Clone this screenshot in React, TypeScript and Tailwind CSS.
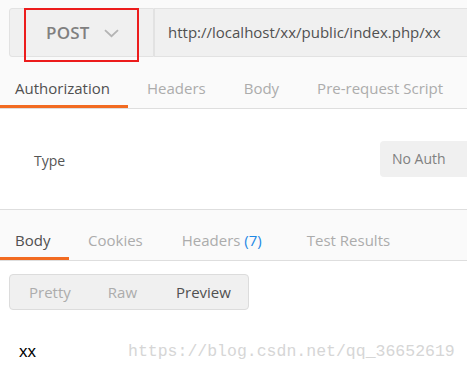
import React from 'react'

const font = { fontFamily: '"Open Sans", "Noto Sans", sans-serif' }

const Tab = ({ label, active, className }: { label: React.ReactNode; active?: boolean; className?: string }) => (
  <div className={`relative h-full flex items-center ${className ?? ''}`}>
    <span className={active ? 'text-[#505050]' : 'text-[#acacac]'}>{label}</span>
    {active && <div className="absolute left-0 right-0 bottom-0 h-[3px] bg-[#f26b21]" />}
  </div>
)

const App = () => {
  return (
    <div className="w-[467px] h-[371px] bg-white overflow-hidden" style={font}>
      <div className="bg-[#fafafa] border-b border-[#dedede]">
        {/* request bar */}
        <div className="flex pt-[8px] pl-[9px]">
          <div className="relative w-[145px] h-[49px] bg-[#f0f0f0] border border-[#e2e2e2] rounded-l-[3px] flex items-center">
            <span className="ml-[36px] text-[17px] font-semibold text-[#808080] tracking-[0.2px]">POST</span>
            <svg className="ml-[14px] mt-[1px]" width="15" height="9" viewBox="0 0 15 9">
              <path d="M1 1.2 L7.5 7.2 L14 1.2" stroke="#b4b4b4" strokeWidth="1.8" fill="none" />
            </svg>
            <div className="absolute left-[14px] top-[-1px] w-[115px] h-[54px] border-2 border-[#ec1c1c]" />
          </div>
          <div className="flex-1 h-[49px] bg-[#f0f0f0] border border-[#e2e2e2] border-r-0 flex items-center pl-[13px] text-[15px] text-[#505050]">
            http://localhost/xx/public/index.php/xx
          </div>
        </div>
        {/* tabs */}
        <div className="flex h-[51px] text-[15px] pt-[11px]">
          <Tab label="Authorization" active className="w-[128px] pl-[15px]" />
          <Tab label="Headers" className="ml-[19px]" />
          <Tab label="Body" className="ml-[38px]" />
          <Tab label="Pre-request Script" className="ml-[38px]" />
        </div>
      </div>

      <div className="h-[101px] flex items-center justify-between border-b border-[#dedede]">
        <span className="ml-[34px] mt-[3px] text-[14px] text-[#555]">Type</span>
        <div className="w-[87px] h-[36px] bg-[#f0f0f0] rounded-l-[4px] flex items-center pl-[12px] text-[14px] text-[#808080] mt-[-1px]">
          No Auth
        </div>
      </div>

      <div className="bg-[#fafafa] border-b border-[#dedede] flex h-[51px] text-[15px] pt-[11px]">
        <Tab label="Body" active className="w-[69px] pl-[15px]" />
        <Tab label="Cookies" className="ml-[19px]" />
        <Tab
          label={
            <>
              Headers <span className="text-[#1e88e5]">(7)</span>
            </>
          }
          className="ml-[39px]"
        />
        <Tab label="Test Results" className="ml-[45px]" />
      </div>

      <div className="pt-[13px] pl-[9px]">
        <div className="w-[240px] h-[36px] bg-[#f0f0f0] border border-[#dcdcdc] rounded-[4px] flex items-center text-[15px]">
          <span className="ml-[19px] text-[#acacac]">Pretty</span>
          <span className="ml-[37px] text-[#acacac]">Raw</span>
          <span className="ml-[39px] text-[#505050]">Preview</span>
        </div>
      </div>

      <div className="flex items-center mt-[30px] h-[24px]">
        <span className="ml-[19px] text-[17px] text-black" style={{ fontFamily: '"Liberation Sans", Arial, sans-serif' }}>
          xx
        </span>
        <span
          className="ml-[92px] text-[16.5px] text-[#d6d6d6]"
          style={{ fontFamily: '"Liberation Mono", monospace' }}
        >
          https://blog.csdn.net/qq_36652619
        </span>
      </div>
    </div>
  )
}

export default App
